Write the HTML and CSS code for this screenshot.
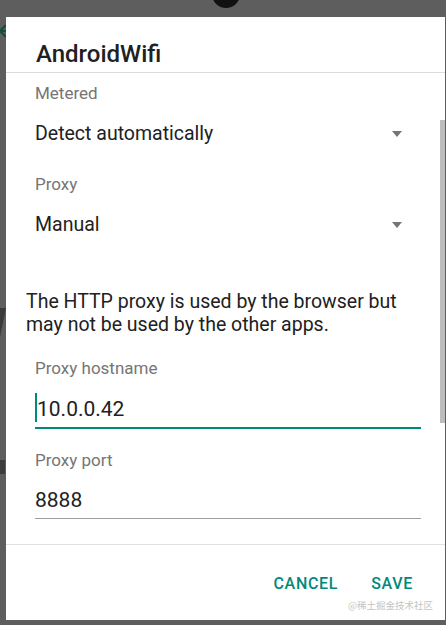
FILE: index.html
```html
<!DOCTYPE html>
<html lang="en">
<head>
    <meta charset="UTF-8">
    <title>AndroidWifi - Proxy settings</title>
    <link rel="stylesheet" href="styles.css">
</head>
<body>
    <div class="screen">
      <div class="notch"></div>
      <svg class="back-arrow" width="8" height="16" viewBox="0 0 8 16">
        <path d="M7 2 L1 8 L7 14 M1 8 H8" fill="none" stroke="#0f4d3c" stroke-width="2"/>
      </svg>
      <div class="bg-wedge"></div>
      <div class="bg-block"></div>

      <div class="dialog">
        <div class="dialog-title">AndroidWifi</div>

        <div class="dialog-body">
          <div class="scroll-thumb"></div>

          <div class="field-label">Metered</div>
          <div class="spinner">
            <span>Detect automatically</span>
            <span class="caret"></span>
          </div>

          <div class="field-label">Proxy</div>
          <div class="spinner">
            <span>Manual</span>
            <span class="caret"></span>
          </div>

          <p class="note">The HTTP proxy is used by the browser but may not be used by the other apps.</p>

          <div class="field-label label-hostname">Proxy hostname</div>
          <div class="edit focused"><span class="cursor"></span>10.0.0.42</div>

          <div class="field-label label-port">Proxy port</div>
          <div class="edit">8888</div>
        </div>

        <div class="dialog-actions">
          <button class="action">CANCEL</button>
          <button class="action">SAVE</button>
        </div>
        <div class="watermark">@稀土掘金技术社区</div>
      </div>
    </div>
</body>
</html>
```

FILE: styles.css
```css
:root {
  --color-teal: #00897b;
  --color-text: #212121;
  --color-hint: #757575;
  --color-divider: #e0e0e0;
}

* {
  box-sizing: border-box;
}

body {
  margin: 0;
  background: #5e5e5e;
  font-family: Roboto, "Noto Sans", sans-serif;
  color: var(--color-text);
}

.screen {
  position: relative;
  width: 446px;
  height: 625px;
  padding: 17px 1px 0 6px;
  overflow: hidden;
}

/* camera cut-out and things behind the dialog */
.notch {
  position: absolute;
  left: 212px;
  top: -20px;
  width: 28px;
  height: 28px;
  border-radius: 50%;
  background: #111;
}
.back-arrow {
  position: absolute;
  left: -1px;
  top: 23px;
}
.bg-wedge {
  position: absolute;
  left: 0;
  top: 308px;
  border-top: 29px solid #3a3a3a;
  border-right: 6px solid transparent;
}
.bg-block {
  position: absolute;
  left: 0;
  top: 460px;
  width: 5px;
  height: 14px;
  background: #3c3c3c;
}

.dialog {
  position: relative;
  width: 439px;
  height: 603px;
  background: #fff;
  display: flex;
  flex-direction: column;
}

.dialog-title {
  padding: 24px 30px 4px;
  font-size: 24px;
  font-weight: 500;
  line-height: 27px;
  border-bottom: 1px solid #dcdcdc;
}

.dialog-body {
  position: relative;
  height: 471px;
  padding: 10px 24px 0 29px;
  overflow: hidden;
}

.scroll-thumb {
  position: absolute;
  right: 0;
  top: 47px;
  width: 5px;
  height: 303px;
  background: #bdbdbd;
}

.field-label {
  font-size: 17px;
  line-height: 20px;
  color: var(--color-hint);
}

.spinner {
  display: flex;
  align-items: center;
  justify-content: space-between;
  height: 48px;
  margin: 7px 0 16px;
  font-size: 19.5px;
  line-height: 48px;
}
.caret {
  width: 0;
  height: 0;
  margin-right: 19px;
  border-left: 5.5px solid transparent;
  border-right: 5.5px solid transparent;
  border-top: 6px solid var(--color-hint);
}

.note {
  margin: 41px 0 0 -9px;
  font-size: 19.5px;
  line-height: 23px;
}

.label-hostname {
  margin-top: 22px;
}
.label-port {
  margin-top: 21px;
}

.edit {
  margin-top: 15px;
  padding-bottom: 3px;
  font-size: 21px;
  line-height: 30px;
  border-bottom: 1px solid #9e9e9e;
}
.edit.focused {
  margin-top: 16px;
  border-bottom: 2px solid var(--color-teal);
}
.cursor {
  display: inline-block;
  width: 2px;
  height: 29px;
  margin-top: -3px;
  vertical-align: -6px;
  background: var(--color-teal);
}

.dialog-actions {
  display: flex;
  justify-content: flex-end;
  gap: 33px;
  padding: 29px 32px 0 0;
  border-top: 1px solid var(--color-divider);
  flex: 1;
}
.action {
  padding: 0;
  border: none;
  background: none;
  font-family: Roboto, "Noto Sans", sans-serif;
  font-size: 16px;
  font-weight: 500;
  letter-spacing: 0.7px;
  line-height: 20px;
  height: 20px;
  color: var(--color-teal);
}

.watermark {
  position: absolute;
  right: 12px;
  bottom: 9px;
  font-family: "Noto Sans CJK SC", sans-serif;
  font-size: 9.5px;
  line-height: 12px;
  color: #c4c4c4;
}
```
